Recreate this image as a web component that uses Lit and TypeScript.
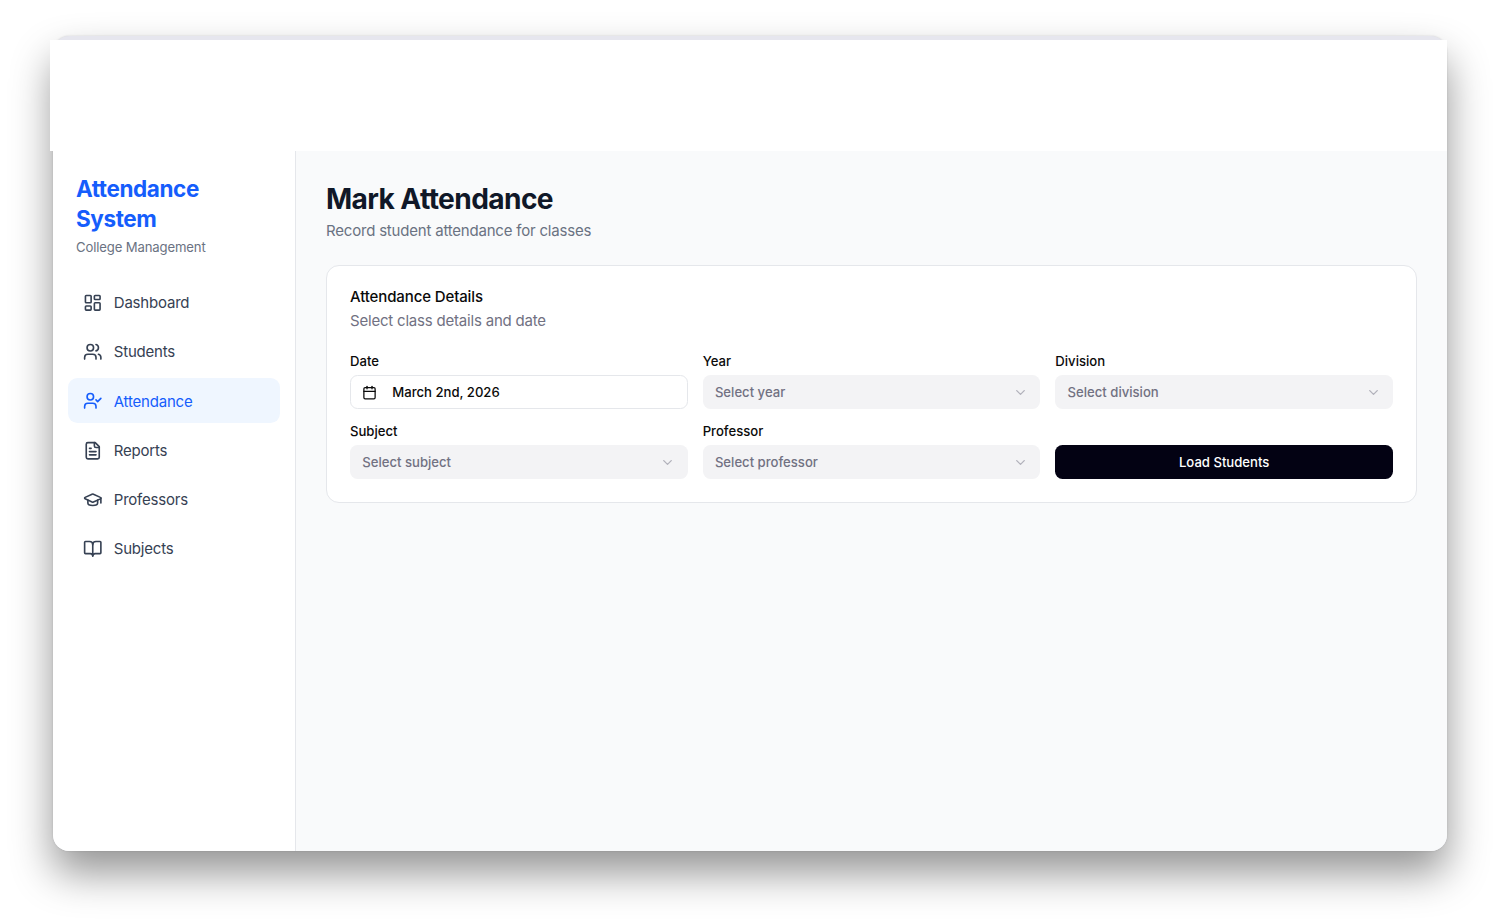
import { LitElement, html, css, svg } from "lit";
import { customElement } from "lit/decorators.js";

const icons = {
  dashboard: svg`<rect x="3" y="3" width="7" height="9" rx="1"/><rect x="14" y="3" width="7" height="5" rx="1"/><rect x="14" y="12" width="7" height="9" rx="1"/><rect x="3" y="16" width="7" height="5" rx="1"/>`,
  users: svg`<path d="M16 21v-2a4 4 0 0 0-4-4H6a4 4 0 0 0-4 4v2"/><circle cx="9" cy="7" r="4"/><path d="M22 21v-2a4 4 0 0 0-3-3.87"/><path d="M16 3.13a4 4 0 0 1 0 7.75"/>`,
  userCheck: svg`<path d="M16 21v-2a4 4 0 0 0-4-4H6a4 4 0 0 0-4 4v2"/><circle cx="9" cy="7" r="4"/><polyline points="16 11 18 13 22 9"/>`,
  file: svg`<path d="M15 2H6a2 2 0 0 0-2 2v16a2 2 0 0 0 2 2h12a2 2 0 0 0 2-2V7Z"/><path d="M14 2v4a2 2 0 0 0 2 2h4"/><path d="M10 9H8"/><path d="M16 13H8"/><path d="M16 17H8"/>`,
  cap: svg`<path d="M21.42 10.922a1 1 0 0 0-.019-1.838L12.83 5.18a2 2 0 0 0-1.66 0L2.6 9.08a1 1 0 0 0 0 1.832l8.57 3.908a2 2 0 0 0 1.66 0z"/><path d="M22 10v6"/><path d="M6 12.5V16a6 3 0 0 0 12 0v-3.5"/>`,
  book: svg`<path d="M12 7v14"/><path d="M3 18a1 1 0 0 1-1-1V4a1 1 0 0 1 1-1h5a4 4 0 0 1 4 4 4 4 0 0 1 4-4h5a1 1 0 0 1 1 1v13a1 1 0 0 1-1 1h-6a3 3 0 0 0-3 3 3 3 0 0 0-3-3z"/>`,
  calendar: svg`<path d="M8 2v4"/><path d="M16 2v4"/><rect x="3" y="4" width="18" height="18" rx="2"/><path d="M3 10h18"/>`,
  chevron: svg`<path d="m6 9 6 6 6-6"/>`,
};

const icon = (shape: unknown, cls: string) => html`<svg class=${cls} viewBox="0 0 24 24" fill="none" stroke="currentColor" stroke-width="2" stroke-linecap="round" stroke-linejoin="round">${shape}</svg>`;

const navItems = [
  { label: "Dashboard", icon: icons.dashboard },
  { label: "Students", icon: icons.users },
  { label: "Attendance", icon: icons.userCheck, active: true },
  { label: "Reports", icon: icons.file },
  { label: "Professors", icon: icons.cap },
  { label: "Subjects", icon: icons.book },
];

@customElement("app-root")
export class AppRoot extends LitElement {
  static styles = css`
    :host {
      display: block;
      height: 921px;
      box-sizing: border-box;
      padding: 36px 53px 70px;
      background: #fff;
      font-family: Inter, "Liberation Sans", sans-serif;
      overflow: hidden;
    }
    * {
      box-sizing: border-box;
    }
    .window {
      height: 815px;
      display: flex;
      flex-direction: column;
      padding-top: 4px;
      background: #e6e6ee;
      border-radius: 16px;
      box-shadow: 0 22px 42px rgba(0, 0, 0, 0.42), 0 0 2px rgba(0, 0, 0, 0.15);
    }
    .band {
      height: 111px;
      flex: none;
      margin-left: -3px;
      background: #fff;
    }
    .body {
      flex: 1;
      min-height: 0;
      display: flex;
      overflow: hidden;
      border-radius: 0 0 16px 16px;
    }
    .sidebar {
      width: 243px;
      flex: none;
      background: #fff;
      border-right: 1px solid #e5e7eb;
      padding: 22.5px 15px;
    }
    .brand {
      padding: 0 8px;
    }
    .brand h1 {
      margin: 0;
      font-size: 22.5px;
      line-height: 30px;
      font-weight: 700;
      letter-spacing: -0.4px;
      color: #155dfc;
    }
    .brand p {
      margin: 4.75px 0 0;
      font-size: 13.125px;
      line-height: 18.75px;
      letter-spacing: -0.13px;
      color: #6a7282;
    }
    nav {
      margin-top: 22.25px;
      display: flex;
      flex-direction: column;
      gap: 3.8px;
    }
    .item {
      height: 45.5px;
      display: flex;
      align-items: center;
      gap: 11.25px;
      padding: 1px 15px 0;
      border-radius: 9.4px;
      font-size: 15px;
      letter-spacing: -0.2px;
      color: #364153;
    }
    .item.active {
      background: #eff6ff;
      color: #155dfc;
    }
    .nav-icon {
      width: 19.5px;
      height: 19.5px;
      flex: none;
    }
    main {
      flex: 1;
      min-width: 0;
      background: #f9fafb;
      padding: 32px 30px 30px;
    }
    h2 {
      margin: 0;
      font-size: 28.125px;
      line-height: 33.75px;
      font-weight: 700;
      letter-spacing: -0.6px;
      color: #101828;
    }
    .lead {
      margin: 3px 0 0;
      font-size: 15px;
      line-height: 22.5px;
      letter-spacing: -0.2px;
      color: #6a7282;
    }
    .card {
      margin-top: 22.5px;
      background: #fff;
      border: 1px solid #e5e7eb;
      border-radius: 13px;
      padding: 23px 23px 22.5px;
    }
    .card h3 {
      margin: 0;
      font-size: 15px;
      line-height: 15px;
      font-weight: 500;
      letter-spacing: -0.12px;
      color: #0a0a0a;
    }
    .card-sub {
      margin: 6.5px 0 0;
      font-size: 15px;
      line-height: 22.5px;
      letter-spacing: -0.2px;
      color: #717182;
    }
    .grid {
      margin-top: 21.75px;
      display: grid;
      grid-template-columns: repeat(3, 1fr);
      gap: 15.5px 15px;
      align-items: end;
    }
    .field {
      display: flex;
      flex-direction: column;
      gap: 7px;
    }
    label {
      font-size: 13.125px;
      line-height: 13.75px;
      font-weight: 500;
      color: #0a0a0a;
    }
    .control {
      height: 33.75px;
      width: 100%;
      display: flex;
      align-items: center;
      justify-content: space-between;
      padding: 0 11.25px;
      border: 1px solid transparent;
      border-radius: 7.5px;
      background: #f3f3f5;
      font: 500 13.125px Inter, "Liberation Sans", sans-serif;
      color: #717182;
    }
    .date {
      justify-content: flex-start;
      gap: 15px;
      background: #fff;
      border-color: #e5e7eb;
      color: #0a0a0a;
    }
    .small {
      width: 15px;
      height: 15px;
      flex: none;
    }
    .chev {
      width: 15px;
      height: 15px;
      flex: none;
      opacity: 0.5;
    }
    .load {
      height: 33.75px;
      width: 100%;
      border: none;
      border-radius: 7.5px;
      background: #030213;
      color: #fff;
      font: 500 13.125px Inter, "Liberation Sans", sans-serif;
    }
  `;

  private select(name: string, placeholder: string) {
    return html`<div class="field">
      <label>${name}</label>
      <div class="control"><span>${placeholder}</span>${icon(icons.chevron, "chev")}</div>
    </div>`;
  }

  render() {
    return html`
      <div class="window">
        <div class="band"></div>
        <div class="body">
          <aside class="sidebar">
            <div class="brand">
              <h1>Attendance System</h1>
              <p>College Management</p>
            </div>
            <nav>
              ${navItems.map(
                (n) => html`<div class="item ${n.active ? "active" : ""}">
                  ${icon(n.icon, "nav-icon")}<span>${n.label}</span>
                </div>`
              )}
            </nav>
          </aside>
          <main>
            <h2>Mark Attendance</h2>
            <p class="lead">Record student attendance for classes</p>
            <section class="card">
              <h3>Attendance Details</h3>
              <p class="card-sub">Select class details and date</p>
              <div class="grid">
                <div class="field">
                  <label>Date</label>
                  <div class="control date">${icon(icons.calendar, "small")}<span>March 2nd, 2026</span></div>
                </div>
                ${this.select("Year", "Select year")}
                ${this.select("Division", "Select division")}
                ${this.select("Subject", "Select subject")}
                ${this.select("Professor", "Select professor")}
                <button class="load">Load Students</button>
              </div>
            </section>
          </main>
        </div>
      </div>
    `;
  }
}
